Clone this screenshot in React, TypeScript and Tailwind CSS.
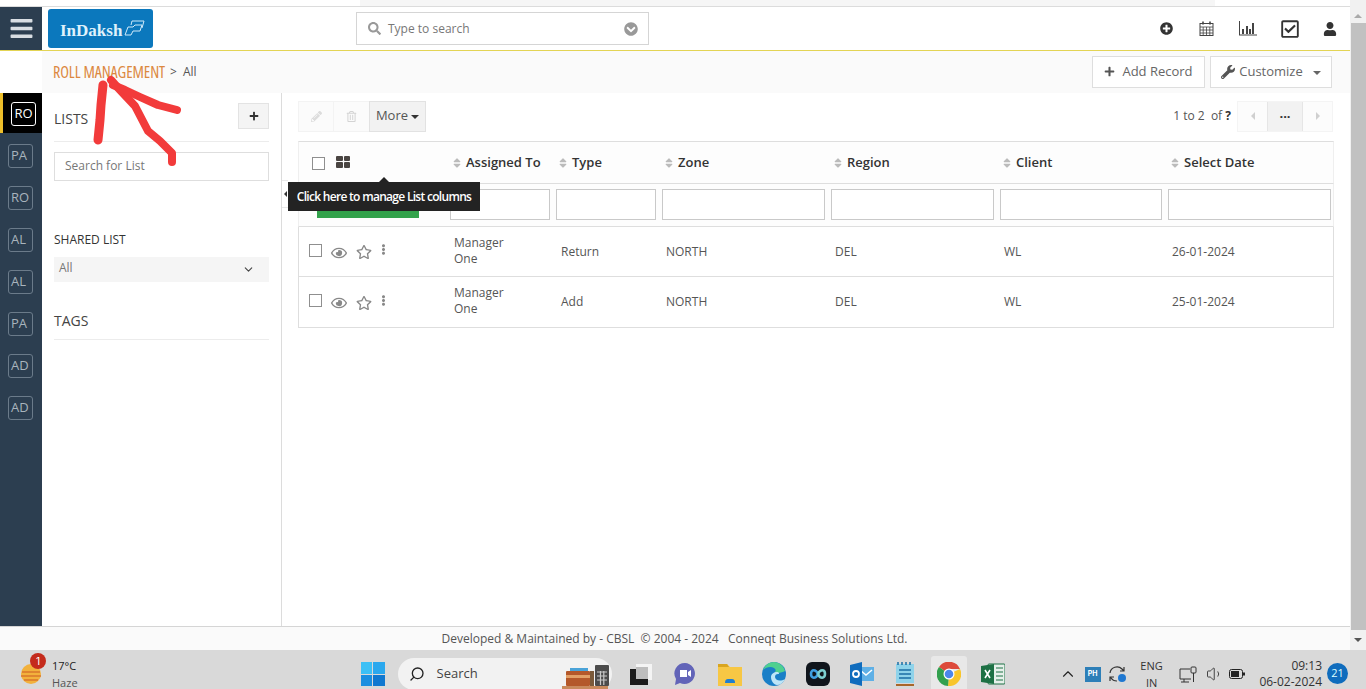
import * as React from "react";
import {
  FaBars,
  FaChevronCircleDown,
  FaEllipsisV,
  FaPencilAlt,
  FaPlus,
  FaPlusCircle,
  FaRegCheckSquare,
  FaRegEye,
  FaRegStar,
  FaRegTrashAlt,
  FaSearch,
  FaSort,
  FaUser,
  FaWrench,
} from "react-icons/fa";
import { ChevronDown, ChevronUp, Search, Volume1 } from "lucide-react";

const navItems = ["PA", "RO", "AL", "AL", "PA", "AD", "AD"];
const columns = ["Assigned To", "Type", "Zone", "Region", "Client", "Select Date"];
const rows = [
  { type: "Return", date: "26-01-2024", h: "h-[50px]" },
  { type: "Add", date: "25-01-2024", h: "h-[51px]" },
];
const gridCols = "grid grid-cols-[151px_106px_106px_169px_169px_168px_1fr]";

function CalendarIcon() {
  return (
    <svg width="15" height="15" viewBox="0 0 15 15" fill="none" stroke="#444" strokeWidth="1">
      <rect x="1" y="2.5" width="13" height="12" />
      <path d="M1 6h13M1 9h13M1 12h13M4.2 6v8.500M7.500 6v8.500M10.800 6v8.500" strokeWidth=".8" />
      <path d="M4 .5v3M11 .5v3" strokeWidth="1.6" />
    </svg>
  );
}

function ChartIcon() {
  return (
    <svg width="18" height="15" viewBox="0 0 18 15" fill="#444">
      <path d="M0 0h1v13.500h17v1H0z" />
      <path d="M3 8h2v5H3zM7 5h2v8H7zM10 8h2v5h-2zM13 2h2v11h-2z" />
    </svg>
  );
}

function Logo() {
  return (
    <div className="flex h-[39px] w-[105px] items-center rounded-[3px] bg-[#0b78bd] pl-[12px]">
      <span className="mt-[3px] font-['Liberation_Serif',serif] text-[17px] font-bold leading-none text-[#dff1fb]">
        InDaksh
      </span>
      <svg className="ml-[2px] mb-[3px]" width="21" height="17" viewBox="0 0 21 17" fill="none" stroke="#cfeafa" strokeWidth="1">
        <path d="M1 16l3-8h5l2-2h7l-2 6h-7l-2 4z" />
        <path d="M7 6l1-4h12l-2 7" />
      </svg>
    </div>
  );
}

function Scribble() {
  return (
    <svg
      className="pointer-events-none absolute left-[90px] top-[75px]"
      width="95"
      height="92"
      viewBox="0 0 95 92"
      fill="none"
      stroke="#f23b3b"
      strokeWidth="8"
      strokeLinecap="round"
      strokeLinejoin="round"
    >
      <path d="M13 10L11 30L10 45L8 65" strokeWidth="9" />
      <path d="M21 5L30 15L45 31L58 56L70 66L82 78L82 87" />
      <path d="M23 10L35 15L50 22L68 30L87 35" />
    </svg>
  );
}

function Toolbar() {
  return (
    <div className="flex h-[32px] items-center justify-between pr-[17px]">
      <div className="flex h-[31px]">
        <div className="flex w-[36px] items-center justify-center border border-[#f3f3f3] bg-[#fbfbfb] text-[#dcdcdc]">
          <FaPencilAlt size={11} />
        </div>
        <div className="flex w-[35px] items-center justify-center border-y border-[#f3f3f3] bg-[#fbfbfb] text-[#d4d4d4]">
          <FaRegTrashAlt size={11} />
        </div>
        <div className="flex w-[57px] items-center justify-center gap-[3px] border border-[#e2e2e2] bg-[#f2f2f2] text-[13px] text-[#555]">
          More
          <span className="mt-[2px] border-x-[4px] border-t-[4px] border-x-transparent border-t-[#333]" />
        </div>
      </div>
      <div className="flex items-center">
        <span className="text-[12px] text-[#555]">
          1 to 2&nbsp; of <b className="text-[#333]">?</b>
        </span>
        <div className="ml-[6px] flex h-[31px] w-[96px] border border-[#f4f4f4] bg-[#fcfcfc]">
          <div className="flex w-[29px] items-center justify-center">
            <span className="border-y-[4px] border-r-[4px] border-y-transparent border-r-[#d0d0d0]" />
          </div>
          <div className="flex w-[36px] items-center justify-center border-x border-[#e6e6e6] bg-[#f2f2f2] pb-[6px] text-[13px] font-bold leading-none text-[#333]">
            ...
          </div>
          <div className="flex flex-1 items-center justify-center">
            <span className="border-y-[4px] border-l-[4px] border-y-transparent border-l-[#d0d0d0]" />
          </div>
        </div>
      </div>
    </div>
  );
}

function ListTable() {
  return (
    <div className="relative mt-[9px] w-[1036px]">
      <div className={`${gridCols} h-[43px] items-center border border-[#dedede] border-x-[#efefef] bg-[#fdfdfd] pt-[1px] text-[13px] font-semibold text-[#333]`}>
        <div className="flex items-center gap-[11px] pl-[13px]">
          <span className="h-[13px] w-[13px] border border-[#8f8f8f] bg-white" />
          <div className="mb-[3px] grid w-[14px] grid-cols-2 gap-[1px]">
            <span className="h-[5.5px] w-[6.5px] rounded-[1px] bg-[#4a4542]" />
            <span className="h-[5.5px] w-[6.5px] rounded-[1px] bg-[#4a4542]" />
            <span className="h-[5.5px] w-[6.5px] rounded-[1px] bg-[#4a4542]" />
            <span className="h-[5.5px] w-[6.5px] rounded-[1px] bg-[#4a4542]" />
          </div>
        </div>
        {columns.map((c) => (
          <div key={c} className="flex items-center gap-[3px] pl-[1px] whitespace-nowrap">
            <FaSort size={12} className="text-[#bbb]" />
            {c}
          </div>
        ))}
      </div>
      <div className={`${gridCols} h-[43px] items-center border-x border-b border-[#dedede] border-x-[#efefef] bg-[#fdfdfd] pb-[2px]`}>
        <div className="pl-[18px] pt-[16px]">
          <div className="h-[12px] w-[102px] bg-[#33a24b]" />
        </div>
        {columns.map((c) => (
          <div key={c} className="pr-[6px] last:pr-[2px]">
            <div className="h-[31px] w-full border border-[#c9c9c9] bg-white" />
          </div>
        ))}
      </div>
      {rows.map((r) => (
        <div
          key={r.date}
          className={`${gridCols} ${r.h} items-center border-x border-b border-[#dedede] bg-white text-[12px] text-[#555]`}
        >
          <div className="flex items-center pl-[10px] text-[#777]">
            <span className="mb-[3px] h-[13px] w-[13px] border border-[#8f8f8f] bg-white" />
            <FaRegEye size={16} className="ml-[9px] mt-[2px] text-[#888]" />
            <FaRegStar size={16} className="ml-[9px] mt-[1px] text-[#888]" />
            <FaEllipsisV size={11} className="ml-[6px] mb-[4px] text-[#888]" />
          </div>
          <div className="w-[70px] -translate-y-[1px] pl-[4px] leading-[16px]">Manager One</div>
          <div className="pl-[5px]">{r.type}</div>
          <div className="-translate-y-[0.5px] pl-[4px]">NORTH</div>
          <div className="-translate-y-[0.5px] pl-[4px]">DEL</div>
          <div className="-translate-y-[0.5px] pl-[4px]">WL</div>
          <div className="-translate-y-[0.5px] pl-[4px]">{r.date}</div>
        </div>
      ))}
      <span className="absolute left-[-16px] top-[39px] h-[28px] w-[6px] border-y border-[#e8e8e8]" />
      <span className="absolute left-[-14px] top-[50px] border-y-[3px] border-r-[3px] border-y-transparent border-r-[#333]" />
      <div className="absolute left-[-10px] top-[41px] flex h-[29px] w-[192px] items-center justify-center bg-[#232323] text-[12px] font-semibold tracking-[-0.7px] text-white">
        <span className="absolute left-[91px] top-[-5px] border-x-[5px] border-b-[5px] border-x-transparent border-b-[#232323]" />
        Click here to manage List columns
      </div>
    </div>
  );
}

function Taskbar() {
  return (
    <div className="relative flex h-[39px] items-center bg-[#d9d9d9] pt-[9px] font-['Inter',sans-serif] text-[#222]">
      <div className="relative ml-[21px] h-[20px] w-[20px]">
        <svg width="20" height="20" viewBox="0 0 20 20">
          <circle cx="10" cy="10" r="10" fill="#f2b13c" />
          <path d="M1 8h18M0 12h20M3 16h14" stroke="#d9772b" strokeWidth="1.6" />
        </svg>
        <span className="absolute left-[9px] top-[-11px] flex h-[16px] w-[16px] items-center justify-center rounded-full bg-[#c42b1c] text-[10px] text-white">
          1
        </span>
      </div>
      <div className="ml-[11px] font-['Open_Sans',sans-serif] text-[11px] leading-[17px]">
        <div className="text-[#222]">17°C</div>
        <div className="text-[#555]">Haze</div>
      </div>

      <div className="ml-[283px] grid h-[24px] w-[24px] grid-cols-2 gap-[1px]">
        <span className="bg-[#3cc0f5]" />
        <span className="bg-[#2aa8ee]" />
        <span className="bg-[#1a8fe0]" />
        <span className="bg-[#0f78d0]" />
      </div>

      <div className="ml-[13px] flex h-[32px] w-[214px] items-center rounded-l-full rounded-r-full bg-[#f2f2f2] pl-[11px]">
        <Search size={16} strokeWidth={2} className="-scale-x-100 text-[#222]" />
        <span className="ml-[12px] font-['Open_Sans',sans-serif] text-[13px] text-[#444]">Search</span>
        <svg className="ml-auto mr-[1px] self-end mb-[1px]" width="49" height="27" viewBox="0 0 49 27">
          <rect x="0" y="24" width="46" height="3" fill="#c98a5c" />
          <rect x="4" y="9" width="24" height="15" rx="1" fill="#b4582a" />
          <rect x="4" y="13" width="24" height="3" fill="#e3a066" />
          <rect x="8" y="6" width="18" height="3" fill="#4aa3d8" />
          <rect x="28" y="9" width="4" height="15" fill="#7b5a3a" />
          <rect x="33" y="3" width="14" height="21" rx="1" fill="#4c4c4c" />
          <path d="M35 10h10M35 14h10M35 18h10M38.500 9v14M41.800 9v14" stroke="#c9c9c9" strokeWidth="1.200" />
        </svg>
      </div>

      <svg className="ml-[18px]" width="22" height="22" viewBox="0 0 22 22">
        <rect x="6" y="1" width="16" height="16" fill="#f4f4f4" />
        <rect x="6" y="4" width="12" height="12" fill="#bdbdbd" />
        <path d="M0 6h6v10h12v6H0z" fill="#1b1b1b" />
      </svg>
      <svg className="ml-[22px]" width="22" height="24" viewBox="0 0 22 24">
        <path d="M11 1a10.500 10.500 0 1 1-5 20l-5 2 1-6A10.500 10.500 0 0 1 11 1z" fill="#6264b8" />
        <path d="M6 8h7v7H6zM14 10l3-2v7l-3-2z" fill="#fff" />
      </svg>
      <svg className="ml-[22px]" width="24" height="23" viewBox="0 0 24 23">
        <path d="M0 1h9l3 3h12v19H0z" fill="#f7c744" />
        <path d="M0 1h9l2 3H0z" fill="#d9a520" />
        <path d="M7 20c0-3 1-4 3-4h4c2 0 3 1 3 4z" fill="#1f7fd0" />
      </svg>
      <svg className="ml-[20px]" width="24" height="24" viewBox="0 0 24 24">
        <circle cx="12" cy="12" r="12" fill="#1a7fc7" />
        <path d="M23 9c-1-5-6-9-11-9C7 0 3 3 1 8c3-3 8-4 11-2c2 1 2 3 1 4c-1 1 4 2 10-1z" fill="#4fd08f" />
        <path d="M9 15c0-3 3-5 6-5c2 0 3 2 1 2c-2 0-3 1-3 3c0 3 5 5 10 2c-2 4-5 6-8 6c-3 0-6-4-6-8z" fill="#bde5f7" />
      </svg>
      <div className="ml-[20px] flex h-[24px] w-[24px] items-center justify-center rounded-[6px] bg-[#10151c]">
        <svg width="18" height="12" viewBox="0 0 18 12" fill="none" strokeWidth="2.600">
          <path d="M9 6C7 1 2 1 2 6s5 5 7 0" stroke="#3f9fe0" />
          <path d="M9 6c2-5 7-5 7 0s-5 5-7 0" stroke="#7ccfd0" />
        </svg>
      </div>
      <svg className="ml-[20px]" width="24" height="24" viewBox="0 0 24 24">
        <rect x="8" y="5" width="16" height="14" fill="#5fb0e6" />
        <path d="M10 8l6 5l6-5" stroke="#fff" strokeWidth="1.500" fill="none" />
        <path d="M0 3l12-3v24L0 21z" fill="#0f6cbd" />
        <circle cx="6" cy="12" r="3" fill="none" stroke="#fff" strokeWidth="1.800" />
      </svg>
      <svg className="ml-[21px]" width="20" height="24" viewBox="0 0 20 24">
        <rect x="1" y="2" width="18" height="19" fill="#8fd3ea" />
        <path d="M4 8h12M4 12h12M4 16h12" stroke="#1d6fa5" strokeWidth="1.500" />
        <path d="M3 0v3M7 0v3M11 0v3M15 0v3" stroke="#1d6fa5" strokeWidth="1.500" />
        <rect x="1" y="22" width="18" height="2" fill="#a8672a" />
      </svg>
      <div className="ml-[16px] flex h-[37px] w-[36px] items-center justify-center rounded-[3px] bg-[#e8e8e8]">
        <svg width="24" height="24" viewBox="0 0 24 24">
          <path d="M12 12L2 5a12 12 0 0 1 21 2H12z" fill="#dd4a3b" />
          <path d="M12 12l11-5a12 12 0 0 1-12 17z" fill="#f8c52c" />
          <path d="M12 12l-1 12A12 12 0 0 1 2 5z" fill="#32a04e" />
          <circle cx="12" cy="12" r="5.500" fill="#fff" />
          <circle cx="12" cy="12" r="4.300" fill="#4b86ec" />
        </svg>
      </div>
      <svg className="ml-[14px]" width="24" height="22" viewBox="0 0 24 22">
        <rect x="7" y="1" width="17" height="20" rx="1" fill="#e6f0ea" stroke="#1d7044" />
        <path d="M15 5h7M15 9h7M15 13h7M15 17h7" stroke="#1d7044" strokeWidth="1.200" />
        <path d="M0 3l13-2v20L0 19z" fill="#1d7044" />
        <path d="M4 7l5 8M9 7l-5 8" stroke="#fff" strokeWidth="1.600" />
      </svg>

      <ChevronUp size={18} strokeWidth={1.5} className="ml-[54px] text-[#222]" />
      <div className="ml-[8px] flex h-[15px] w-[16px] items-center justify-center bg-[#2d7fb8] text-[7px] font-bold text-white">
        PH
      </div>
      <svg className="ml-[8px]" width="18" height="18" viewBox="0 0 18 18" fill="none" stroke="#333" strokeWidth="1.200">
        <path d="M1 8a7 7 0 0 1 12-4l2 2M15 2v4h-4M8 16a7 7 0 0 1-6-3l-1-1M1 16v-4h4" />
        <circle cx="13" cy="13" r="4" fill="#1f78d1" stroke="none" />
      </svg>
      <div className="ml-[9px] w-[32px] text-center font-['Open_Sans',sans-serif] text-[11px] leading-[17px] text-[#333]">
        ENG
        <br />
        IN
      </div>
      <svg className="ml-[11px]" width="18" height="17" viewBox="0 0 18 17" fill="none" stroke="#333">
        <path d="M11 3H1v10h11M5 13v3M2 16h8" />
        <rect x="12" y="1" width="5" height="6" rx="1" />
        <path d="M14.500 7v9" />
      </svg>
      <Volume1 size={18} strokeWidth={1.2} className="ml-[9px] text-[#333]" />
      <svg className="ml-[5px]" width="16" height="10" viewBox="0 0 16 10" fill="none" stroke="#222">
        <rect x=".5" y=".5" width="13" height="9" rx="2" />
        <rect x="2" y="2" width="8" height="6" fill="#222" stroke="none" />
        <rect x="14" y="3.500" width="2" height="3" fill="#222" stroke="none" />
      </svg>
      <div className="ml-auto mr-[44px] text-right font-['Open_Sans',sans-serif] text-[12px] leading-[16px] text-[#333]">
        <div>09:13</div>
        <div>06-02-2024</div>
      </div>
      <span className="absolute left-[1327px] top-[13px] flex h-[21px] w-[21px] items-center justify-center rounded-full bg-[#0f6cbd] font-['Open_Sans',sans-serif] text-[11px] text-[#dff]">
        21
      </span>
    </div>
  );
}

export default function App() {
  return (
    <div className="relative flex h-[689px] w-[1366px] flex-col overflow-hidden bg-white font-['Open_Sans',sans-serif]">
      <div className="flex h-[650px]">
        <div className="flex w-[1350px] flex-col">
          <div className="h-[7px] border-b border-[#dcdcdc]">
            <div className="ml-[360px] h-[6px] w-[855px] bg-[#f6f6f6]" />
          </div>

          <header className="flex h-[44px] items-center border-b border-[#e3d454] bg-white">
            <div className="flex h-full w-[42px] items-center justify-center bg-[#2c3e50] text-[#d8dde2]">
              <FaBars size={25} />
            </div>
            <div className="ml-[6px]">
              <Logo />
            </div>
            <div className="ml-[203px] flex h-[33px] w-[293px] items-center border border-[#d5d5d5] bg-white pl-[11px] pr-[10px]">
              <FaSearch size={13} className="text-[#999]" />
              <span className="ml-[7px] flex-1 text-[12px] text-[#777]">Type to search</span>
              <FaChevronCircleDown size={14} className="text-[#999]" />
            </div>
            <div className="ml-auto flex items-center pr-[13px] text-[#333]">
              <FaPlusCircle size={13} />
              <div className="ml-[26px]"><CalendarIcon /></div>
              <div className="ml-[25px]"><ChartIcon /></div>
              <FaRegCheckSquare size={20} className="ml-[23px]" />
              <FaUser size={14} className="ml-[23px]" />
            </div>
          </header>

          <div className="flex h-[42px]">
            <div className="w-[42px] bg-white" />
            <div className="flex flex-1 items-center bg-[#fafafa] pl-[11px] pr-[18px]">
              <span className="font-stretch-condensed text-[16px] tracking-[-0.07px] text-[#dc8840]">ROLL MANAGEMENT</span>
              <span className="ml-[5px] text-[12px] text-[#555]">&gt;</span>
              <span className="ml-[6px] text-[12px] text-[#555]">All</span>
              <div className="ml-auto flex gap-[5px] pb-[1px] text-[13px] text-[#666]">
                <div className="flex h-[32px] w-[113px] items-center justify-center gap-[7px] border border-[#dedede] bg-white">
                  <FaPlus size={11} className="text-[#555]" />
                  Add Record
                </div>
                <div className="flex h-[32px] w-[122px] items-center justify-center gap-[4px] border border-[#dedede] bg-white">
                  <FaWrench size={14} className="text-[#555]" />
                  Customize
                  <span className="ml-[6px] mt-[2px] border-x-[4px] border-t-[4px] border-x-transparent border-t-[#666]" />
                </div>
              </div>
            </div>
          </div>

          <div className="flex flex-1 border-b border-[#d5d5d5]">
            <nav className="w-[42px] bg-[#2c3e50] text-[13px]">
              <div className="flex h-[40px] items-center border-l-[3px] border-[#eebf2a] bg-black pl-[8px] pt-[2px]">
                <span className="flex h-[24px] w-[25px] items-center justify-center rounded-[3px] border border-white text-white">
                  RO
                </span>
              </div>
              <div className="flex flex-col gap-[18px] pl-[8px] pt-[11px]">
                {navItems.map((n, i) => (
                  <div key={i} className="flex h-[24px] w-[25px] items-center rounded-[3px] border border-[#6b7b8a] pl-[2px] text-[#a9b4bd]">
                    {n}
                  </div>
                ))}
              </div>
            </nav>

            <aside className="w-[240px] border-r border-[#dcdcdc] px-[12px] pt-[10px]">
              <div className="flex h-[26px] items-center justify-between">
                <span className="mt-[4px] text-[14px] text-[#444]">LISTS</span>
                <div className="flex h-[26px] w-[31px] items-center justify-center border border-[#e3e3e3] bg-[#f4f4f4] text-[#333]">
                  <FaPlus size={10} />
                </div>
              </div>
              <div className="mt-[12px] border-t border-[#ececec] pt-[10px]">
                <div className="flex h-[29px] items-center border border-[#dedede] pb-[2px] pl-[10px] text-[12px] text-[#777]">
                  Search for List
                </div>
              </div>
              <div className="mt-[50px] text-[12px] text-[#333]">SHARED LIST</div>
              <div className="mt-[8px] flex h-[25px] items-center justify-between bg-[#f5f5f5] pl-[5px] pr-[14px] pb-[4px] text-[12px] text-[#777]">
                All
                <ChevronDown size={13} className="mt-[4px] text-[#444]" />
              </div>
              <div className="mt-[28px] text-[14px] text-[#444]">TAGS</div>
              <div className="mt-[8px] border-t border-[#ececec]" />
            </aside>

            <main className="flex-1 pl-[16px] pt-[7px]">
              <Toolbar />
              <ListTable />
            </main>
          </div>

          <footer className="flex h-[23px] items-center justify-center bg-[#fafafa] pr-[1px] text-[12px] text-[#555]">
            Developed &amp; Maintained by - CBSL &nbsp;© 2004 - 2024 &nbsp; Conneqt Business Solutions Ltd.
          </footer>
        </div>

        <div className="flex w-[16px] flex-col items-center bg-[#f1f1f1] pt-[14px]">
          <span className="border-x-[4px] border-b-[4px] border-x-transparent border-b-[#aaa]" />
          <div className="mt-[5px] h-[607px] w-[15px] self-end bg-[#c1c1c1]" />
          <span className="mt-[8px] border-x-[4px] border-t-[4px] border-x-transparent border-t-[#555]" />
        </div>
      </div>
      <Taskbar />
      <Scribble />
    </div>
  );
}
